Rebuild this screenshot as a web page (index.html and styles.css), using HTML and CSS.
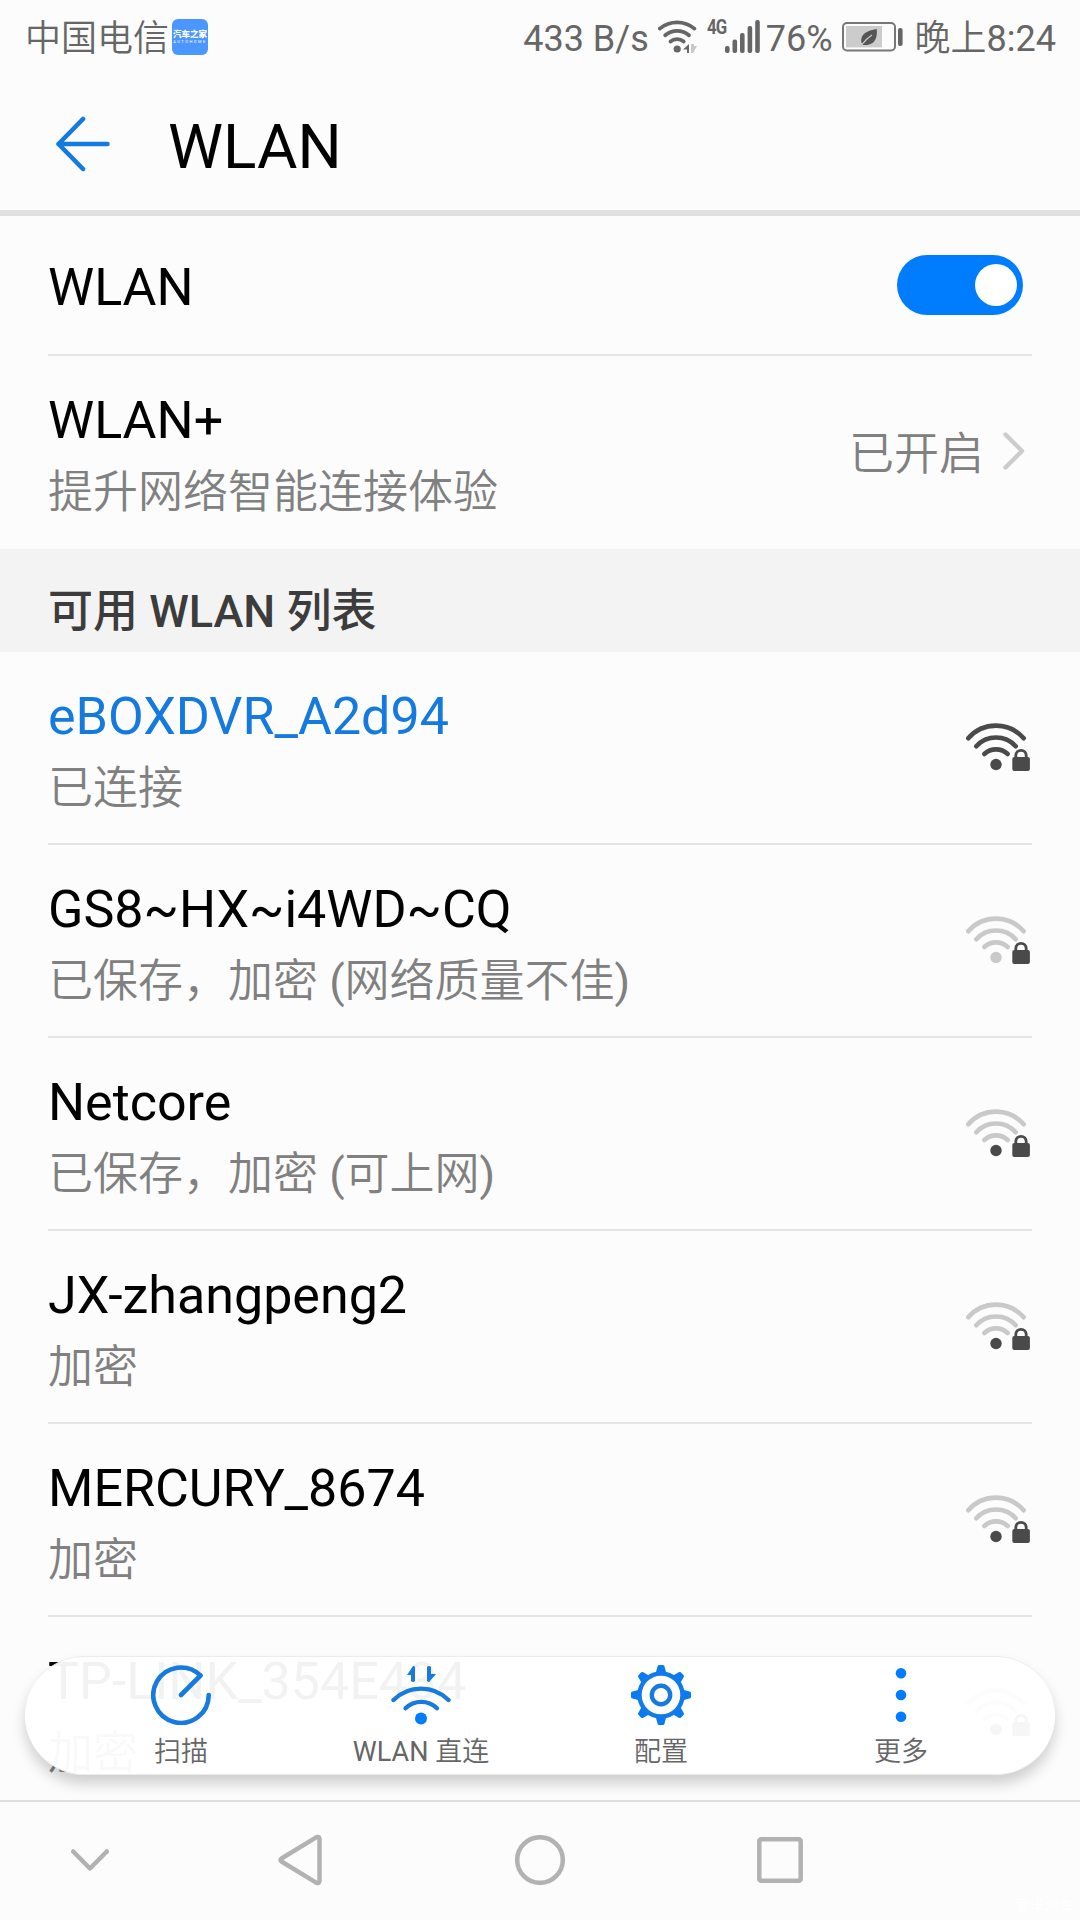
FILE: index.html
```html
<!DOCTYPE html>
<html lang="zh-CN">
<head>
    <meta charset="UTF-8">
    <meta name="viewport" content="width=device-width, initial-scale=1.0">
    <title>WLAN</title>
    <link rel="stylesheet" href="styles.css">
</head>
<body>
    <!-- 公用图标 -->
    <svg class="sprite" width="0" height="0">
        <symbol id="wifi" viewBox="0 0 64 48">
            <g fill="none" stroke="currentColor" stroke-width="4.6" stroke-linecap="round">
                <path d="M2.3 15.3A36.7 36.7 0 0 1 57.7 15.3"/>
                <path d="M10.3 23.2A26.7 26.7 0 0 1 49.7 23.2"/>
                <path d="M18.3 31A17 17 0 0 1 41.7 31"/>
            </g>
            <circle cx="30" cy="41.5" r="5.7"/>
            <path d="M49.8 34V32.5a5.2 5.2 0 0 1 10.4 0V34" fill="none" stroke="#4a4a4a" stroke-width="2.8"/>
            <rect x="46.3" y="34" width="17.6" height="14" rx="2" fill="#4a4a4a"/>
        </symbol>
    </svg>

    <div class="phone">
        <div class="status-bar">
            <span class="carrier">中国电信</span>
            <span class="app-badge"><b>汽车之家</b><i>AUTOHOME</i></span>
            <span class="speed">433 B/s</span>
            <svg class="status-wifi" width="40" height="34" viewBox="0 0 40 34">
                <g fill="none" stroke="#666" stroke-width="3.8" stroke-linecap="round">
                    <path d="M1.8 8.6A27 27 0 0 1 36.4 8.6"/>
                    <path d="M7.2 15.3A18.5 18.5 0 0 1 31 15.3"/>
                    <path d="M12.5 21.5A10.5 10.5 0 0 1 25.7 21.5"/>
                </g>
                <circle cx="19.2" cy="29" r="3.6" fill="#666"/>
                <path d="M31 24v9h-2v-3.5h-4z" fill="#666"/>
                <path d="M33 24v9h2l4-7h-3v-2z" fill="#c8c8c8"/>
            </svg>
            <span class="net-type">4G</span>
            <svg class="signal" width="36" height="34" viewBox="0 0 36 34">
                <g fill="#666">
                    <rect x="0" y="27" width="4.6" height="7" rx="2"/>
                    <rect x="7.5" y="20.5" width="4.6" height="13.5" rx="2"/>
                    <rect x="15" y="14" width="4.6" height="20" rx="2"/>
                    <rect x="22.6" y="7" width="4.6" height="27" rx="2"/>
                    <rect x="30.2" y="1" width="4.6" height="33" rx="2"/>
                </g>
            </svg>
            <span class="percent">76%</span>
            <svg class="battery" width="62" height="30" viewBox="0 0 62 30">
                <rect x="1" y="1" width="52" height="27.4" rx="4" fill="none" stroke="#777" stroke-width="2"/>
                <rect x="4" y="4" width="36" height="21.4" fill="#ccc"/>
                <rect x="56" y="6" width="4.6" height="18" rx="2" fill="#666"/>
                <path d="M34.8 7C25 8.500 18.500 12 19.200 20L21 23c8 .6 15-2.500 13.800-16z" fill="#555"/>
                <path d="M20 22.500C23 18.500 26 15.500 30 13" fill="none" stroke="#ccc" stroke-width="1.2"/>
            </svg>
            <span class="time">晚上<span class="latin">8:24</span></span>
        </div>

        <header class="title-bar">
            <svg width="54" height="56" viewBox="0 0 54 56">
                <path d="M27 3L2.500 28L27 53M2.500 28H51.500" fill="none" stroke="#147ae0" stroke-width="4.6" stroke-linecap="round" stroke-linejoin="round"/>
            </svg>
            <h1>WLAN</h1>
        </header>

        <main>
            <div class="row row-switch">
                <span class="name">WLAN</span>
                <span class="switch"></span>
            </div>
            <div class="row row-plus">
                <div class="info">
                    <span class="name">WLAN+</span>
                    <span class="desc">提升网络智能连接体验</span>
                </div>
                <span class="value">已开启</span>
                <svg class="chevron" width="22" height="38" viewBox="0 0 22 38">
                    <path d="M2.500 2.500L19 19L2.500 35.500" fill="none" stroke="#ccc" stroke-width="4.4" stroke-linecap="round" stroke-linejoin="round"/>
                </svg>
            </div>

            <h2 class="section">可用 WLAN 列表</h2>

            <div class="row">
                <div class="info">
                    <span class="name connected">eBOXDVR_A2d94</span>
                    <span class="desc">已连接</span>
                </div>
                <svg class="wifi level-4"><use href="#wifi"/></svg>
            </div>
            <div class="row">
                <div class="info">
                    <span class="name">GS8~HX~i4WD~CQ</span>
                    <span class="desc">已保存，加密<span class="latin"> (</span>网络质量不佳<span class="latin">)</span></span>
                </div>
                <svg class="wifi level-0"><use href="#wifi"/></svg>
            </div>
            <div class="row">
                <div class="info">
                    <span class="name">Netcore</span>
                    <span class="desc">已保存，加密<span class="latin"> (</span>可上网<span class="latin">)</span></span>
                </div>
                <svg class="wifi level-1"><use href="#wifi"/></svg>
            </div>
            <div class="row">
                <div class="info">
                    <span class="name">JX-zhangpeng2</span>
                    <span class="desc">加密</span>
                </div>
                <svg class="wifi level-1"><use href="#wifi"/></svg>
            </div>
            <div class="row">
                <div class="info">
                    <span class="name">MERCURY_8674</span>
                    <span class="desc">加密</span>
                </div>
                <svg class="wifi level-1"><use href="#wifi"/></svg>
            </div>
            <div class="row">
                <div class="info">
                    <span class="name">TP-LINK_354E434</span>
                    <span class="desc">加密</span>
                </div>
                <svg class="wifi level-1"><use href="#wifi"/></svg>
            </div>
        </main>

        <!-- 悬浮工具栏 -->
        <div class="toolbar">
            <div class="tool">
                <svg width="60" height="60" viewBox="0 0 60 60">
                    <path d="M30 30L49.500 10.500A27.700 27.700 0 1 0 57.700 30" fill="none" stroke="#177ade" stroke-width="4.6" stroke-linecap="round" stroke-linejoin="round"/>
                </svg>
                <span>扫描</span>
            </div>
            <div class="tool">
                <svg width="60" height="60" viewBox="0 0 60 60">
                    <g fill="none" stroke="#177ade" stroke-width="4.4" stroke-linecap="round">
                        <path d="M2.500 35A39 39 0 0 1 57.500 35"/>
                        <path d="M14.500 43.300A22.500 22.500 0 0 1 46 43.300"/>
                    </g>
                    <circle cx="30" cy="53.500" r="6" fill="#007dff"/>
                    <path d="M24 2v14q-2 2-4 0v-6h-4l6-9q2 0 2 1z" fill="#177ade"/>
                    <path d="M36 2v14q2 2 3 0l6-7h-5V2q-2-2-4 0z" fill="#177ade"/>
                </svg>
                <span><span class="latin">WLAN </span>直连</span>
            </div>
            <div class="tool">
                <svg width="60" height="60" viewBox="0 0 60 60">
                    <g fill="#087bf2">
                        <path id="tooth" d="M24.500 9L26.500 1.500Q26.800 0 28 0h4Q33.200 0 33.500 1.500L35.500 9z"/>
                        <use href="#tooth" transform="rotate(45 30 30)"/>
                        <use href="#tooth" transform="rotate(90 30 30)"/>
                        <use href="#tooth" transform="rotate(135 30 30)"/>
                        <use href="#tooth" transform="rotate(180 30 30)"/>
                        <use href="#tooth" transform="rotate(225 30 30)"/>
                        <use href="#tooth" transform="rotate(270 30 30)"/>
                        <use href="#tooth" transform="rotate(315 30 30)"/>
                    </g>
                    <circle cx="30" cy="30" r="21.500" fill="#fff" stroke="#127bea" stroke-width="4.400"/>
                    <circle cx="30" cy="30" r="9.200" fill="none" stroke="#177ade" stroke-width="4.400"/>
                </svg>
                <span>配置</span>
            </div>
            <div class="tool">
                <svg width="60" height="60" viewBox="0 0 60 60">
                    <g fill="#007dff">
                        <circle cx="30" cy="8.300" r="5.300"/>
                        <circle cx="30" cy="30" r="5.300"/>
                        <circle cx="30" cy="51.700" r="5.300"/>
                    </g>
                </svg>
                <span>更多</span>
            </div>
        </div>

        <nav class="nav-bar">
            <svg width="38" height="22" viewBox="0 0 38 22">
                <path d="M2.200 2.500L19 19.500L35.800 2.500"/>
            </svg>
            <svg width="44" height="52" viewBox="0 0 44 52">
                <path d="M39.500 3Q41.500 3 41.500 5V47Q41.500 49.500 38.500 48.800L3.500 27.500Q1.500 26 3.500 24.500L38.500 3.200z"/>
            </svg>
            <svg width="50" height="50" viewBox="0 0 50 50">
                <circle cx="25" cy="25" r="22.800"/>
            </svg>
            <svg width="46" height="46" viewBox="0 0 46 46">
                <rect x="2.300" y="2.300" width="41.400" height="41.400" rx="2"/>
            </svg>
            <span class="watermark">爱卡汽车</span>
        </nav>
    </div>
</body>
</html>
```

FILE: styles.css
```css
* {
    box-sizing: border-box;
    margin: 0;
    padding: 0;
}

body {
    background: #fcfcfc;
    font-family: Roboto, "Noto Sans CJK SC", sans-serif;
    color: #000;
}

svg {
    display: block;
    flex: none;
}

.sprite {
    position: absolute;
}

.phone {
    position: relative;
    width: 1080px;
    height: 1920px;
    overflow: hidden;
    display: flex;
    flex-direction: column;
    background: #fcfcfc;
}

/* 中文用细一档的字重，西文保持常规 */
.latin {
    font-weight: 400;
}

/* 状态栏 */
.status-bar {
    flex: none;
    display: flex;
    align-items: center;
    height: 74px;
    padding: 0 24px 0 25px;
    font-size: 36px;
    line-height: 70px;
    color: #666;
    white-space: nowrap;
}

.carrier,
.speed,
.percent,
.time {
    padding-top: 3px;
}

.carrier {
    width: 147px;
    font-weight: 350;
}

.app-badge {
    width: 36px;
    height: 36px;
    padding-top: 11px;
    border-radius: 6px;
    background: #4c97ff;
    color: #fff;
    text-align: center;
    line-height: 9px;
}

.app-badge b {
    display: block;
    font-size: 8.5px;
    font-weight: 900;
}

.app-badge i {
    display: block;
    font-size: 4px;
    font-style: normal;
    line-height: 5px;
    letter-spacing: 1.5px;
}

.speed {
    margin-left: auto;
}

.status-wifi {
    margin-left: 9px;
}

.net-type {
    margin: -20px 0 0 9px;
    width: 18px;
    font-size: 21px;
    font-weight: 700;
    line-height: 20px;
    letter-spacing: -1px;
    transform: scaleX(.8);
    transform-origin: left;
}

.signal {
    margin-top: -2px;
}

.percent {
    margin-left: 5px;
}

.battery {
    margin-left: 9px;
}

.time {
    margin-left: 11px;
    font-weight: 350;
}

/* 标题栏 */
.title-bar {
    flex: none;
    display: flex;
    align-items: center;
    height: 142px;
    padding: 4px 0 0 56px;
    border-bottom: 6px solid #e0e0e0;
}

.title-bar h1 {
    margin: 4px 0 0 58px;
    font-size: 62px;
    font-weight: 400;
}

main {
    flex: 1;
    min-height: 0;
    overflow: hidden;
}

.row {
    display: flex;
    align-items: center;
    height: 193px;
    margin: 0 48px;
    border-bottom: 2px solid #e4e4e4;
}

.row-switch {
    height: 140px;
    padding-right: 9px;
}

.row-switch .name {
    padding-top: 5px;
}

.row-plus {
    padding-right: 7px;
    border-bottom-color: transparent;
}

.info {
    flex: 1;
    padding-top: 11px;
}

.name,
.desc {
    display: block;
    white-space: nowrap;
}

.name {
    font-size: 52px;
    line-height: 72px;
}

.desc {
    font-size: 45px;
    line-height: 72px;
    font-weight: 350;
    color: #808080;
}

.connected {
    color: #147ae0;
}

.switch {
    width: 126px;
    height: 60px;
    margin-left: auto;
    padding: 9px 6px;
    border-radius: 30px;
    background: #007dff;
}

.switch::after {
    content: "";
    display: block;
    width: 42px;
    height: 42px;
    margin-left: auto;
    border-radius: 50%;
    background: #fff;
}

.value {
    margin-top: -2px;
    font-size: 45px;
    font-weight: 350;
    color: #808080;
}

.chevron {
    margin: -2px 0 0 19px;
}

.section {
    height: 103px;
    padding: 11px 48px 0;
    background: #f3f3f3;
    color: #3c3c3c;
    font-size: 45px;
    font-weight: 500;
    line-height: 103px;
}

/* 信号强度 */
.wifi {
    width: 64px;
    height: 48px;
    margin: -1px 2px 0 0;
    color: #c9c9c9;
    fill: #4a4a4a;
}

.level-0 {
    fill: #c9c9c9;
}

.level-4 {
    color: #4a4a4a;
}

/* 悬浮工具栏 */
.toolbar {
    position: absolute;
    left: 25px;
    top: 1656px;
    display: flex;
    width: 1030px;
    height: 119px;
    padding: 8px 34px 0 36px;
    border: 1px solid #ececec;
    border-width: 1px 0;
    border-radius: 60px;
    background: rgba(255, 255, 255, .95);
    box-shadow: 0 9px 14px rgba(0, 0, 0, .18);
}

.tool {
    flex: 1;
    display: flex;
    flex-direction: column;
    align-items: center;
    font-size: 27px;
    line-height: 54px;
    font-weight: 350;
    color: #666;
}

/* 导航键 */
.nav-bar {
    position: relative;
    flex: none;
    display: grid;
    grid-template-columns: 180px 240px 240px 240px 180px;
    align-items: center;
    justify-items: center;
    height: 120px;
    padding-bottom: 2px;
    border-top: 2px solid #dedede;
    background: #fcfcfc;
}

.nav-bar svg {
    fill: none;
    stroke: #b2b2b2;
    stroke-width: 4.5;
    stroke-linecap: round;
    stroke-linejoin: round;
}

.watermark {
    position: absolute;
    right: 5px;
    bottom: 4px;
    font-size: 15px;
    line-height: 20px;
    color: #fff;
}
```
